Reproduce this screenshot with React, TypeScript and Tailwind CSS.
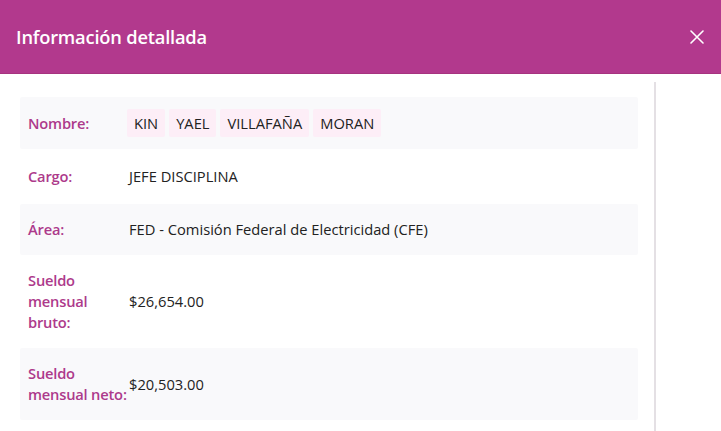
import React from "react";

const font = { fontFamily: '"Open Sans", "Noto Sans", Arial, sans-serif' };

function Row({
  label,
  children,
  striped,
  py,
}: {
  label: React.ReactNode;
  children: React.ReactNode;
  striped?: boolean;
  py: string;
}) {
  return (
    <div className={`flex items-center ${py} ${striped ? "bg-[#f9f9fb]" : "bg-white"} rounded-[2px]`}>
      <div className="w-[109px] shrink-0 pl-[8px] pr-[1px] text-[14.7px] leading-[21px] font-semibold tracking-[-0.2px] text-[#ad3a8b]">
        {label}
      </div>
      <div className="text-[14.7px] leading-[21px] text-[#222]">{children}</div>
    </div>
  );
}

export default function App() {
  const names = ["KIN", "YAEL", "VILLAFAÑA", "MORAN"];
  return (
    <div className="w-[721px] h-[431px] bg-white overflow-hidden" style={font}>
      <div className="h-[74px] bg-[#b2398d] border-b border-[#a6337f] flex items-center justify-between pl-[16px] pr-[16px]">
        <div className="text-white text-[18.3px] font-semibold tracking-[-0.2px]">Información detallada</div>
        <svg width="14" height="14" viewBox="0 0 14 14" className="mr-[1px]">
          <path d="M1 1 L13 13 M13 1 L1 13" stroke="white" strokeWidth="1.6" strokeLinecap="round" />
        </svg>
      </div>
      <div className="flex">
        <div className="w-[656px] h-[357px] border-r-2 border-[#e4e0e4] pl-[20px] pr-[16px] pt-[15px] mt-[8px]">
          <Row label="Nombre:" striped py="py-[12px]">
            <div className="flex gap-[4px] -ml-[2px]">
              {names.map((n) => (
                <span key={n} className="bg-[#fdeef7] px-[7px] h-[28px] flex items-center rounded-[2px]">
                  {n}
                </span>
              ))}
            </div>
          </Row>
          <Row label="Cargo:" py="py-[17px]">JEFE DISCIPLINA</Row>
          <Row label="Área:" striped py="py-[15px]">FED - Comisión Federal de Electricidad (CFE)</Row>
          <Row label={<>Sueldo<br />mensual<br />bruto:</>} py="py-[15px]">$26,654.00</Row>
          <Row label={<>Sueldo<br /><span className="whitespace-nowrap">mensual neto:</span></>} striped py="py-[15px]">$20,503.00</Row>
        </div>
      </div>
    </div>
  );
}
